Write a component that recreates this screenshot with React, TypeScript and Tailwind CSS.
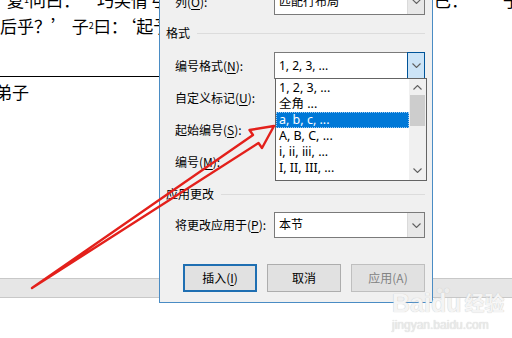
import React from 'react'

const cjk = "font-['Noto_Sans_CJK_SC',sans-serif]"
const latin = "font-['Noto_Sans','Noto_Sans_CJK_SC',sans-serif]"

const Chevron: React.FC<{ up?: boolean; color?: string }> = ({ up = false, color = '#606060' }) => (
  <svg width="9" height="5" viewBox="0 0 9 5">
    <path
      d={up ? 'M0.5 4.5 L4.5 0.5 L8.5 4.5' : 'M0.5 0.5 L4.5 4.5 L8.5 0.5'}
      fill="none"
      stroke={color}
      strokeWidth="1.1"
    />
  </svg>
)

interface SelectBoxProps {
  value: string
  focused?: boolean
  height?: string
  children?: React.ReactNode
}

const SelectBox: React.FC<SelectBoxProps> = ({ value, focused = false, height = 'h-[27px]', children }) => (
  <div className={`relative w-[151px] ${height} flex bg-white border border-[#7a7a7a]`}>
    <div className={`flex-1 flex items-center pl-[4px] text-[12px] text-black ${latin}`}>{value}</div>
    <div
      className={`w-[17px] flex items-center justify-center ${
        focused ? 'bg-[#cce4f7] border border-[#005499] -my-px -mr-px w-[18px]' : 'bg-[#e8e8e8] border-l border-[#dadada]'
      }`}
    >
      <Chevron />
    </div>
    {children}
  </div>
)

const Mn: React.FC<{ c: string }> = ({ c }) => <span className="underline underline-offset-2">{c}</span>

const Row: React.FC<{ label: React.ReactNode; children?: React.ReactNode; className?: string }> = ({
  label,
  children,
  className = '',
}) => (
  <div className={`flex items-center h-[27px] pl-[9px] ${className}`}>
    <div className={`w-[99px] text-[12px] text-black ${cjk}`}>{label}</div>
    {children}
  </div>
)

const GroupTitle: React.FC<{ title: string; className?: string }> = ({ title, className = '' }) => (
  <div className={`flex items-center h-[16px] ${className}`}>
    <span className={`text-[12px] text-black ${cjk}`}>{title}</span>
    <div className="flex-1 ml-[7px] h-px bg-[#dcdcdc]" />
  </div>
)

const listItems = ['1, 2, 3, ...', '全角 ...', 'a, b, c, ...', 'A, B, C, ...', 'i, ii, iii, ...', 'I, II, III, ...']

const ListBox: React.FC = () => (
  <div className="absolute left-[0px] top-full w-[152px] h-[103px] bg-white border border-[#646464] flex z-10">
    <div className="flex-1 pt-px">
      {listItems.map((item, i) => (
        <div
          key={item}
          className={`h-[16px] flex items-center pl-[3px] text-[12.5px] ${latin} ${
            i === 2 ? 'bg-[#0078d7] text-white outline outline-1 outline-dotted outline-[#9fcaf0] -outline-offset-1' : 'text-black'
          }`}
        >
          {item}
        </div>
      ))}
    </div>
    <div className="w-[17px] bg-[#f0f0f0] flex flex-col items-center">
      <div className="h-[16px] flex items-center justify-center">
        <Chevron up />
      </div>
      <div className="w-[15px] h-[31px] bg-[#cdcdcd]" />
      <div className="flex-1" />
      <div className="h-[16px] flex items-center justify-center mb-[2px]">
        <Chevron />
      </div>
    </div>
  </div>
)

const Button: React.FC<{ label: React.ReactNode; primary?: boolean; disabled?: boolean }> = ({
  label,
  primary = false,
  disabled = false,
}) => (
  <div
    className={`w-[74px] h-[28px] flex items-center justify-center bg-[#e1e1e1] text-[12px] ${cjk} ${
      primary ? 'border-2 border-[#1f6fb2]' : 'border border-[#adadad]'
    } ${disabled ? 'text-[#838383] border-[#bfbfbf]' : 'text-black'}`}
  >
    {label}
  </div>
)

const Dialog: React.FC = () => (
  <div className="absolute left-[159px] top-[-20px] w-[274px] h-[323px] bg-[#f0f0f0] border border-[#4a8cc4] pt-[7px] pl-[6px] pr-[7px] pb-[10px] flex flex-col">
    <Row label={<>列(<Mn c="O" />):</>}>
      <SelectBox value="匹配行布局" />
    </Row>
    <GroupTitle title="格式" className="mt-[10px]" />
    <Row label={<>编号格式(<Mn c="N" />):</>} className="mt-[11px] relative z-10">
      <SelectBox value="1, 2, 3, ..." focused>
        <ListBox />
      </SelectBox>
    </Row>
    <Row label={<>自定义标记(<Mn c="U" />):</>} className="mt-[5px]" />
    <Row label={<>起始编号(<Mn c="S" />):</>} className="mt-[5px]" />
    <Row label={<>编号(<Mn c="M" />):</>} className="mt-[5px]" />
    <GroupTitle title="应用更改" className="mt-[11px]" />
    <div className="flex items-center h-[26px] pl-[9px] mt-[10px]">
      <div className={`w-[99px] text-[12px] text-black ${cjk}`}>
        将更改应用于(<Mn c="P" />):
      </div>
      <SelectBox value="本节" height="h-[26px]" />
    </div>
    <div className="flex gap-[10px] pl-[17px] mt-[26px]">
      <Button label={<>插入(<Mn c="I" />)</>} primary />
      <Button label="取消" />
      <Button label="应用(A)" disabled />
    </div>
  </div>
)

const Arrow: React.FC = () => (
  <svg className="absolute inset-0 pointer-events-none z-20" width="512" height="338" viewBox="0 0 512 338">
    <polygon
      points="32,288 253,135 249.5,130 274,126 262,148 258.5,143"
      fill="none"
      stroke="#e3201b"
      strokeWidth="2.4"
      strokeLinejoin="round"
    />
  </svg>
)

const Watermark: React.FC = () => (
  <div className="absolute left-[392px] top-[291px] flex flex-col items-start pointer-events-none z-20">
    <div className="flex items-end text-[25px] leading-[24px] font-bold text-[#f4f4f4] font-['Liberation_Sans',sans-serif] [text-shadow:0_0_1px_#bdbdbd]">
      <span>Bai</span>
      <span className="relative">
        du
        <span className="absolute left-[5px] top-[-13px] text-[12px] text-[#ececec] [text-shadow:0_0_1px_#c4c4c4]">●●</span>
      </span>
      <span className={`ml-[3px] text-[20px] ${cjk}`}>经验</span>
    </div>
    <div className="text-[12px] leading-[14px] mt-[3px] text-[#ececec] font-['Liberation_Sans',sans-serif] [text-shadow:0_0_1px_#c4c4c4]">
      jingyan.baidu.com
    </div>
  </div>
)

export default function App() {
  return (
    <div className="relative w-[512px] h-[338px] overflow-hidden bg-white">
      <div className={`text-[17px] leading-[26px] text-black ${cjk} -mt-[13px]`}>
        <div className="flex whitespace-nowrap">
          <span className="w-[434px] shrink-0 overflow-hidden pl-[7px]">
            夏<sup className="text-[9px]">1</sup>问曰：　‘巧笑倩兮，美目盼兮，素以为绚兮。’
          </span>
          <span>已：</span>
          <span className="ml-[35px]">子曰</span>
        </div>
        <div className="whitespace-nowrap">
          后乎？’ 子<sup className="text-[9px]">2</sup>曰：‘起予者商也！始可与言诗已矣。’
        </div>
      </div>
      <div className="mt-[37px] w-[159px] border-t border-black" />
      <div className={`mt-[2px] -ml-[5px] text-[17px] leading-[26px] text-black ${cjk}`}>弟子</div>
      <div className="mt-[173px] h-[20px] bg-[#e6e6e6] border-y border-[#c8c8c8]" />
      <Dialog />
      <Arrow />
      <Watermark />
    </div>
  )
}
